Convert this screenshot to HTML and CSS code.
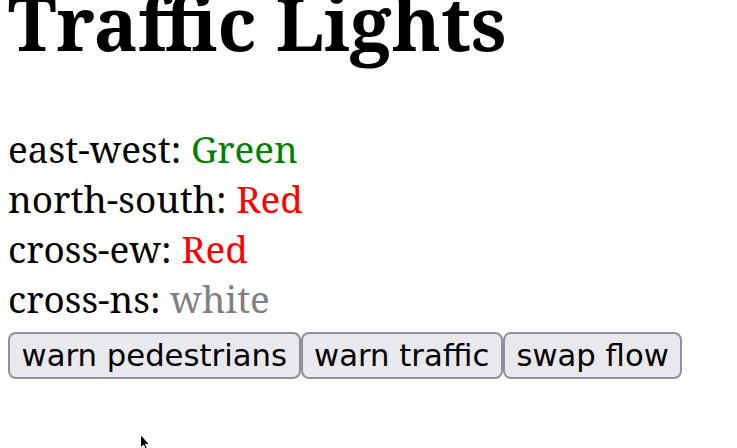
FILE: index.html
```html
<!DOCTYPE html>
<html>
<head>
<meta charset="utf-8">
<link rel="stylesheet" href="styles.css">
</head>
<body>
<h1 class="title">Traffic Lights</h1>
<div class="status">
  <div class="row">east-west: <span class="green">Green</span></div>
  <div class="row">north-south: <span class="red">Red</span></div>
  <div class="row">cross-ew: <span class="red">Red</span></div>
  <div class="row">cross-ns: <span class="white">white</span></div>
</div>
<div class="controls">
  <button class="btn">warn pedestrians</button><button class="btn">warn traffic</button><button class="btn">swap flow</button>
</div>
<svg class="cursor" width="12" height="18" viewBox="0 0 12 18"><path d="M0.5 0.5 L0.5 14 L3.5 11 L6 16.5 L8 15.5 L5.5 10.5 L9.5 10.5 Z" fill="#000" stroke="#fff" stroke-width="1"/></svg>
</body>
</html>
```
FILE: styles.css
```css
html, body {
  margin: 0;
  padding: 0;
  background: #fff;
}
body {
  padding: 0 8px;
  font-family: "Noto Serif", serif;
  font-size: 36.9px;
  color: #000;
  position: relative;
  height: 448px;
  overflow: hidden;
}
.title {
  font-size: 74px;
  font-weight: bold;
  margin: -14px 0 0 0;
  line-height: 1;
}
.status {
  margin-top: 64px;
}
.green { color: green; }
.red { color: red; }
.white { color: gray; }
.controls {
  display: flex;
  gap: 0;
  margin-top: 8px;
}
.btn {
  font-family: "DejaVu Sans", sans-serif;
  font-size: 30.7px;
  background: #e9e9ed;
  border: 2px solid #8f8f9d;
  border-radius: 8px;
  padding: 4px 11.6px;
  color: #000;
}
.cursor {
  position: absolute;
  left: 140px;
  top: 434px;
}
```
